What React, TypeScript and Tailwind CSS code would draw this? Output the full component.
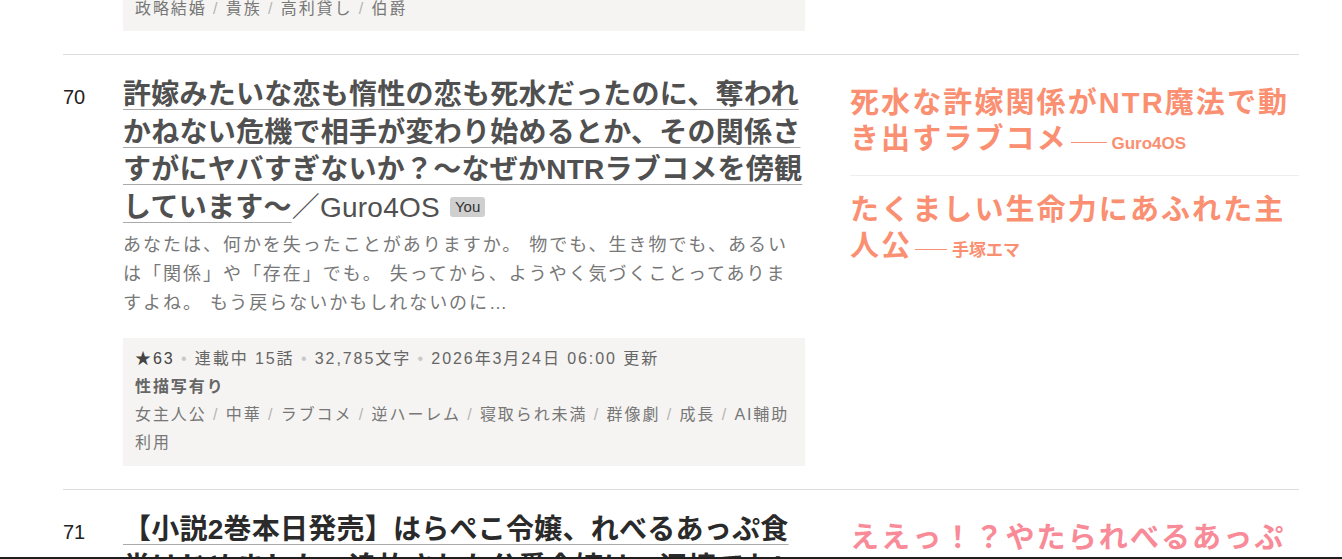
import React from "react";

type Catch = { text: string; author: string; color: string };

type Work = {
  rank: number;
  title: string;
  author: string;
  titleColor: string;
  isMine?: boolean;
  summary?: string;
  stars?: string;
  status?: string;
  chars?: string;
  updated?: string;
  warning?: string;
  tags?: string[];
  catches: Catch[];
};

const works: Work[] = [
  {
    rank: 70,
    title:
      "許嫁みたいな恋も惰性の恋も死水だったのに、奪われかねない危機で相手が変わり始めるとか、その関係さすがにヤバすぎないか？〜なぜかNTRラブコメを傍観しています〜",
    author: "Guro4OS",
    titleColor: "text-[#505050]",
    isMine: true,
    summary:
      "あなたは、何かを失ったことがありますか。 物でも、生き物でも、あるいは「関係」や「存在」でも。 失ってから、ようやく気づくことってありますよね。 もう戻らないかもしれないのに…",
    stars: "★63",
    status: "連載中 15話",
    chars: "32,785文字",
    updated: "2026年3月24日 06:00 更新",
    warning: "性描写有り",
    tags: ["女主人公", "中華", "ラブコメ", "逆ハーレム", "寝取られ未満", "群像劇", "成長", "AI輔助利用"],
    catches: [
      { text: "死水な許嫁関係がNTR魔法で動き出すラブコメ", author: "Guro4OS", color: "text-[#fa8f72]" },
      { text: "たくましい生命力にあふれた主人公", author: "手塚エマ", color: "text-[#fa8f72]" },
    ],
  },
  {
    rank: 71,
    title:
      "【小説2巻本日発売】はらぺこ令嬢、れべるあっぷ食堂はじめました〜追放された公爵令嬢は、辺境でおいしいごはんを作ります〜",
    author: "",
    titleColor: "text-[#2a2a2a]",
    catches: [
      { text: "ええっ！？やたられべるあっぷな食堂が開店しました", author: "", color: "text-[#f98a97]" },
    ],
  },
];

function TagList({ tags }: { tags: string[] }) {
  return (
    <div className="text-[#777]">
      {tags.map((t, i) => (
        <React.Fragment key={t}>
          {i > 0 && <span className="text-[#b5b5b5]"> / </span>}
          <span>{t}</span>
        </React.Fragment>
      ))}
    </div>
  );
}

function Dot() {
  return <span className="text-[#c8c8c8]"> • </span>;
}

function CatchCopy({ c, rule }: { c: Catch; rule: string }) {
  return (
    <p className={`text-[29px] font-bold leading-[36px] tracking-[2.1px] ${c.color}`}>
      {c.text}
      {c.author && (
        <span className="ml-[3px] text-[17px] leading-none tracking-normal">
          <span className={`inline-block h-px ${rule} bg-current align-[6px]`} /> {c.author}
        </span>
      )}
    </p>
  );
}

function Entry({ w, last }: { w: Work; last?: boolean }) {
  return (
    <article className={`flex pt-[21px] pb-[23px] ${last ? "" : "border-b border-[#ddd]"}`}>
      <div className="flex items-baseline">
        <div className="w-[60px] text-[20px] text-[#222]">{w.rank}</div>
        <div className="w-[682px]">
          <h2 className={`text-[28px] leading-[37.5px] tracking-[0.25px] ${w.titleColor}`}>
            <a className="font-bold underline decoration-[#aaa] decoration-1 underline-offset-[5px]">
              {w.title}
            </a>
            {w.author && <span>／{w.author}</span>}
            {w.isMine && (
              <span className="ml-[10px] inline-block rounded-[3px] bg-[#cfcfcf] px-[5px] align-[5px] text-[15px] leading-[20px] tracking-normal text-[#333]">
                You
              </span>
            )}
          </h2>
          {w.summary && (
            <p className="mt-[5px] text-[18px] leading-[29px] tracking-[0.11em] text-[#777]">{w.summary}</p>
          )}
          {w.tags && (
            <div className="mt-[20px] bg-[#f5f4f2] pl-3 pr-2 pt-[7px] pb-[9px] text-[16px] leading-[28px] tracking-[0.12em] text-[#666]">
              <div>
                <span className="text-[#444]">{w.stars}</span>
                <Dot />
                {w.status}
                <Dot />
                {w.chars}
                <Dot />
                {w.updated}
              </div>
              <div className="font-bold text-[#666]">{w.warning}</div>
              <TagList tags={w.tags} />
            </div>
          )}
        </div>
      </div>
      <div className="ml-[45px] w-[449px] pt-[9px]">
        {w.catches.map((c, i) => (
          <div
            key={c.text}
            className={
              i < w.catches.length - 1 ? "border-b border-[#eee] pb-[18px]" : i > 0 ? "pt-[16px]" : ""
            }
          >
            <CatchCopy c={c} rule={i === 0 ? "w-[36px]" : "w-[32px]"} />
          </div>
        ))}
      </div>
    </article>
  );
}

export default function App() {
  return (
    <div className="relative h-[559px] overflow-hidden bg-white font-['Liberation_Sans','Noto_Sans_CJK_JP',sans-serif]">
      <div className="ml-[63px] w-[1236px]">
        {/* tail of the previous entry's info box */}
        <div className="border-b border-[#ddd] pb-[23px] pl-[60px]">
          <div className="-mt-[5px] w-[682px] bg-[#f5f4f2] pl-3 pr-2 pb-2 text-[16px] leading-[28px] tracking-[0.12em]">
            <TagList tags={["政略結婚", "貴族", "高利貸し", "伯爵"]} />
          </div>
        </div>
        {works.map((w, i) => (
          <Entry key={w.rank} w={w} last={i === works.length - 1} />
        ))}
      </div>
      <div className="absolute bottom-0 left-0 right-0 h-[2px] bg-[#1e1e1e]" />
    </div>
  );
}
